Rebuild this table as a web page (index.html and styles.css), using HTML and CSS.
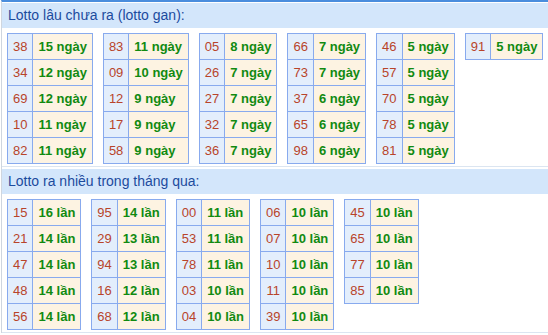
FILE: index.html
```html
<!DOCTYPE html>
<html lang="vi">
<head>
<meta charset="utf-8">
<title>Lotto</title>
<link rel="stylesheet" href="styles.css">
</head>
<body>
<div class="page">
  <section class="sec sec-first">
    <h2 class="head">Lotto lâu chưa ra (lotto gan):</h2>
    <div class="tables">
      <table class="tb"><tr><td class="num">38</td><td class="val">15 ngày</td></tr><tr><td class="num">34</td><td class="val">12 ngày</td></tr><tr><td class="num">69</td><td class="val">12 ngày</td></tr><tr><td class="num">10</td><td class="val">11 ngày</td></tr><tr><td class="num">82</td><td class="val">11 ngày</td></tr></table>
      <table class="tb"><tr><td class="num">83</td><td class="val">11 ngày</td></tr><tr><td class="num">09</td><td class="val">10 ngày</td></tr><tr><td class="num">12</td><td class="val">9 ngày</td></tr><tr><td class="num">17</td><td class="val">9 ngày</td></tr><tr><td class="num">58</td><td class="val">9 ngày</td></tr></table>
      <table class="tb"><tr><td class="num">05</td><td class="val">8 ngày</td></tr><tr><td class="num">26</td><td class="val">7 ngày</td></tr><tr><td class="num">27</td><td class="val">7 ngày</td></tr><tr><td class="num">32</td><td class="val">7 ngày</td></tr><tr><td class="num">36</td><td class="val">7 ngày</td></tr></table>
      <table class="tb"><tr><td class="num">66</td><td class="val">7 ngày</td></tr><tr><td class="num">73</td><td class="val">7 ngày</td></tr><tr><td class="num">37</td><td class="val">6 ngày</td></tr><tr><td class="num">65</td><td class="val">6 ngày</td></tr><tr><td class="num">98</td><td class="val">6 ngày</td></tr></table>
      <table class="tb"><tr><td class="num">46</td><td class="val">5 ngày</td></tr><tr><td class="num">57</td><td class="val">5 ngày</td></tr><tr><td class="num">70</td><td class="val">5 ngày</td></tr><tr><td class="num">78</td><td class="val">5 ngày</td></tr><tr><td class="num">81</td><td class="val">5 ngày</td></tr></table>
      <table class="tb"><tr><td class="num">91</td><td class="val">5 ngày</td></tr></table>
    </div>
  </section>
  <section class="sec">
    <h2 class="head">Lotto ra nhiều trong tháng qua:</h2>
    <div class="tables">
      <table class="tb"><tr><td class="num">15</td><td class="val">16 lần</td></tr><tr><td class="num">21</td><td class="val">14 lần</td></tr><tr><td class="num">47</td><td class="val">14 lần</td></tr><tr><td class="num">48</td><td class="val">14 lần</td></tr><tr><td class="num">56</td><td class="val">14 lần</td></tr></table>
      <table class="tb"><tr><td class="num">95</td><td class="val">14 lần</td></tr><tr><td class="num">29</td><td class="val">13 lần</td></tr><tr><td class="num">94</td><td class="val">13 lần</td></tr><tr><td class="num">16</td><td class="val">12 lần</td></tr><tr><td class="num">68</td><td class="val">12 lần</td></tr></table>
      <table class="tb"><tr><td class="num">00</td><td class="val">11 lần</td></tr><tr><td class="num">53</td><td class="val">11 lần</td></tr><tr><td class="num">78</td><td class="val">11 lần</td></tr><tr><td class="num">03</td><td class="val">10 lần</td></tr><tr><td class="num">04</td><td class="val">10 lần</td></tr></table>
      <table class="tb"><tr><td class="num">06</td><td class="val">10 lần</td></tr><tr><td class="num">07</td><td class="val">10 lần</td></tr><tr><td class="num">10</td><td class="val">10 lần</td></tr><tr><td class="num">11</td><td class="val">10 lần</td></tr><tr><td class="num">39</td><td class="val">10 lần</td></tr></table>
      <table class="tb"><tr><td class="num">45</td><td class="val">10 lần</td></tr><tr><td class="num">65</td><td class="val">10 lần</td></tr><tr><td class="num">77</td><td class="val">10 lần</td></tr><tr><td class="num">85</td><td class="val">10 lần</td></tr></table>
    </div>
  </section>
</div>
</body>
</html>
```
FILE: styles.css
```css
html, body {
  margin: 0;
  padding: 0;
  background: #ffffff;
}
body {
  font-family: "Liberation Sans", Arial, sans-serif;
  font-size: 13px;
}
.page {
  margin-left: 1px;
  border-left: 1px solid #cfd6df;
  border-top: 2px solid #4a8ddd;
  padding-top: 1px;
}
.sec {
  padding-bottom: 2px;
  border-bottom: 1px solid #dbe5f1;
  margin-bottom: 2px;
}
.head {
  margin: 0;
  height: 25px;
  line-height: 25px;
  padding-left: 6px;
  background: #d3e6fb;
  color: #1c4b9e;
  font-size: 14px;
  font-weight: normal;
}
.tables {
  display: flex;
  align-items: flex-start;
  gap: 10px;
  padding: 5px 0 0 5px;
}
.tb {
  border-collapse: collapse;
}
.tb td {
  border: 1px solid #88aaee;
  padding: 5px;
  line-height: 15px;
  font-size: 13px;
  white-space: nowrap;
}
.num {
  background: #e3eefc;
  color: #b8442a;
  text-align: center;
}
.val {
  background: #fdf3e2;
  color: #118a11;
  font-weight: bold;
}
```
